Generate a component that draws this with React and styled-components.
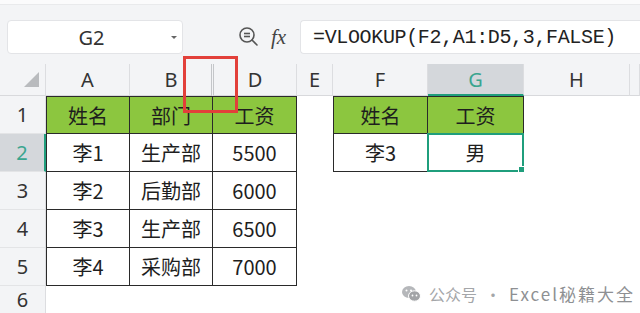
import React from "react";
import styled, { createGlobalStyle } from "styled-components";

const GlobalStyle = createGlobalStyle`
  html, body {
    margin: 0;
    padding: 0;
    background: #ffffff;
    overflow: hidden;
  }
  * {
    box-sizing: border-box;
  }
`;

const Page = styled.div`
  position: relative;
  width: 640px;
  height: 313px;
  overflow: hidden;
  font-family: "Noto Sans CJK SC", "Noto Sans", sans-serif;
  color: #222;
`;

const TopStrip = styled.div`
  height: 5px;
  background: #fbfbfc;
  border-bottom: 1px solid #e9eaec;
`;

const FormulaBar = styled.div`
  height: 59px;
  background: #f3f4f6;
  display: flex;
  align-items: flex-start;
  padding-top: 15px;
  padding-left: 7px;
`;

const NameBox = styled.div`
  width: 176px;
  height: 34px;
  background: #ffffff;
  border: 1px solid #e3e4e7;
  border-radius: 4px;
  display: flex;
  align-items: center;
  font-family: "Noto Sans", sans-serif;
  font-size: 20px;
  color: #333;
`;

const NameText = styled.span`
  flex: 1;
  text-align: center;
  padding-left: 4px;
`;

const DropArrow = styled.span`
  width: 0;
  height: 0;
  margin-right: 5px;
  border-left: 3px solid transparent;
  border-right: 3px solid transparent;
  border-top: 3px solid #666;
`;

const FormulaTools = styled.div`
  width: 117px;
  height: 34px;
  display: flex;
  align-items: center;
  padding-left: 55px;
  gap: 11px;
`;

const Fx = styled.span`
  font-family: "Liberation Serif", serif;
  font-style: italic;
  font-size: 21px;
  color: #444;
  line-height: 1;
`;

const FormulaInput = styled.div`
  flex: 1;
  height: 34px;
  background: #ffffff;
  border: 1px solid #e3e4e7;
  border-right: none;
  border-radius: 4px 0 0 4px;
  display: flex;
  align-items: center;
  padding-left: 12px;
  font-family: "Liberation Mono", monospace;
  font-size: 20px;
  letter-spacing: -0.35px;
  color: #222;
  white-space: nowrap;
`;

const Sheet = styled.div`
  display: grid;
  grid-template-columns: 46px 84px 83px 84px 36px 95px 96px 106px 1fr;
  grid-template-rows: 32px repeat(5, 38px) 1fr;
  height: 249px;
`;

const Corner = styled.div`
  background: #f3f4f6;
  border-right: 1px solid #dcdde0;
  border-bottom: 1px solid #d8d9dc;
  display: flex;
  align-items: flex-end;
  justify-content: flex-end;
  padding: 0 6px 8px 0;
`;

const Triangle = styled.span`
  width: 0;
  height: 0;
  border-left: 15px solid transparent;
  border-bottom: 15px solid #b9bbbe;
`;

const ColHead = styled.div`
  background: ${(p) => (p.$active ? "#d4d7db" : "#f3f4f6")};
  color: ${(p) => (p.$active ? "#3aa58f" : "#333")};
  border-right: 1px solid #dcdde0;
  border-bottom: ${(p) => (p.$active ? "2px solid #1f9e7c" : "1px solid #d8d9dc")};
  border-left: ${(p) => (p.$hiddenBefore ? "3px double #c4c6c9" : "none")};
  margin-left: ${(p) => (p.$hiddenBefore ? "-2px" : "0")};
  display: flex;
  align-items: center;
  justify-content: center;
  font-family: "Noto Sans", sans-serif;
  font-size: 20px;
`;

const RowHead = styled.div`
  background: ${(p) => (p.$active ? "#d4d7db" : "#f3f4f6")};
  color: ${(p) => (p.$active ? "#3aa58f" : "#333")};
  border-right: ${(p) => (p.$active ? "2px solid #1f9e7c" : "1px solid #dcdde0")};
  border-bottom: 1px solid #e3e4e6;
  display: flex;
  align-items: center;
  justify-content: center;
  font-family: "Noto Sans", sans-serif;
  font-size: 20px;
`;

const Cell = styled.div`
  position: relative;
  display: flex;
  align-items: center;
  justify-content: center;
  font-size: 20px;
  color: #1e1e1e;
  background: ${(p) => (p.$fill ? "#8cc63f" : "#ffffff")};
  border-right: ${(p) => (p.$box ? "1px solid #2a2a2a" : "none")};
  border-bottom: ${(p) => (p.$box ? "1px solid #2a2a2a" : "none")};
  border-left: ${(p) => (p.$box && p.$left ? "1px solid #2a2a2a" : "none")};
  border-top: ${(p) => (p.$box && p.$top ? "1px solid #2a2a2a" : "none")};

  ${(p) =>
    p.$selected &&
    `
    border: 2px solid #1f9e7c;
    margin: -1px 0 0 -1px;
    &::after {
      content: "";
      position: absolute;
      right: -4px;
      bottom: -4px;
      width: 6px;
      height: 6px;
      background: #1f9e7c;
      border: 1px solid #ffffff;
    }
  `}
`;

const RedMark = styled.div`
  position: absolute;
  left: 183px;
  top: 56px;
  width: 55px;
  height: 57px;
  border: 3px solid #e2403a;
`;

const Watermark = styled.div`
  position: absolute;
  left: 402px;
  top: 281px;
  display: flex;
  align-items: center;
  gap: 8px;
  color: #a4a6a9;
  font-size: 16px;
  white-space: nowrap;
`;

const MarkName = styled.span`
  font-size: 17px;
  letter-spacing: 2px;
  color: #8e9093;
`;

const ZoomIcon = () => (
  <svg width="22" height="22" viewBox="0 0 22 22" fill="none" stroke="#555" strokeWidth="1.6">
    <circle cx="9" cy="9" r="7" />
    <line x1="6" y1="7.5" x2="12" y2="7.5" />
    <line x1="6" y1="10.5" x2="12" y2="10.5" />
    <line x1="14" y1="14" x2="19" y2="19" strokeLinecap="round" />
  </svg>
);

const WeChatIcon = () => (
  <svg width="19" height="17" viewBox="0 0 19 17">
    <ellipse cx="7" cy="7" rx="7" ry="6" fill="#b5b7ba" />
    <ellipse cx="12.5" cy="11" rx="6" ry="5.2" fill="#a2a4a7" stroke="#ffffff" strokeWidth="1" />
    <circle cx="4.5" cy="5.5" r="1" fill="#fff" />
    <circle cx="9" cy="5.5" r="1" fill="#fff" />
    <circle cx="10.5" cy="10.5" r="0.9" fill="#fff" />
    <circle cx="14.5" cy="10.5" r="0.9" fill="#fff" />
  </svg>
);

const columns = ["A", "B", "D", "E", "F", "G", "H", ""];

// A..D table, then empty E, then F..G lookup table, then H and the rest
const rows = [
  ["姓名", "部门", "工资", null, "姓名", "工资", null, null],
  ["李1", "生产部", "5500", null, "李3", "男", null, null],
  ["李2", "后勤部", "6000", null, null, null, null, null],
  ["李3", "生产部", "6500", null, null, null, null, null],
  ["李4", "采购部", "7000", null, null, null, null, null],
  [null, null, null, null, null, null, null, null],
];

const inBox = (r, c) => (c <= 2 && r <= 4) || ((c === 4 || c === 5) && r <= 1);

export default function App() {
  return (
    <Page>
      <GlobalStyle />
      <TopStrip />
      <FormulaBar>
        <NameBox>
          <NameText>G2</NameText>
          <DropArrow />
        </NameBox>
        <FormulaTools>
          <ZoomIcon />
          <Fx>fx</Fx>
        </FormulaTools>
        <FormulaInput>=VLOOKUP(F2,A1:D5,3,FALSE)</FormulaInput>
      </FormulaBar>

      <Sheet>
        <Corner>
          <Triangle />
        </Corner>
        {columns.map((c, i) => (
          <ColHead key={i} $active={c === "G"} $hiddenBefore={c === "D"}>
            {c}
          </ColHead>
        ))}
        {rows.map((row, r) => (
          <React.Fragment key={r}>
            <RowHead $active={r === 1}>{r + 1}</RowHead>
            {row.map((v, c) => {
              const box = inBox(r, c);
              return (
                <Cell
                  key={c}
                  $box={box}
                  $fill={box && r === 0}
                  $left={c === 0 || c === 4}
                  $top={r === 0}
                  $selected={r === 1 && c === 5}
                >
                  {v}
                </Cell>
              );
            })}
          </React.Fragment>
        ))}
      </Sheet>

      <RedMark />

      <Watermark>
        <WeChatIcon />
        <span>公众号</span>
        <span>·</span>
        <MarkName>Excel秘籍大全</MarkName>
      </Watermark>
    </Page>
  );
}
